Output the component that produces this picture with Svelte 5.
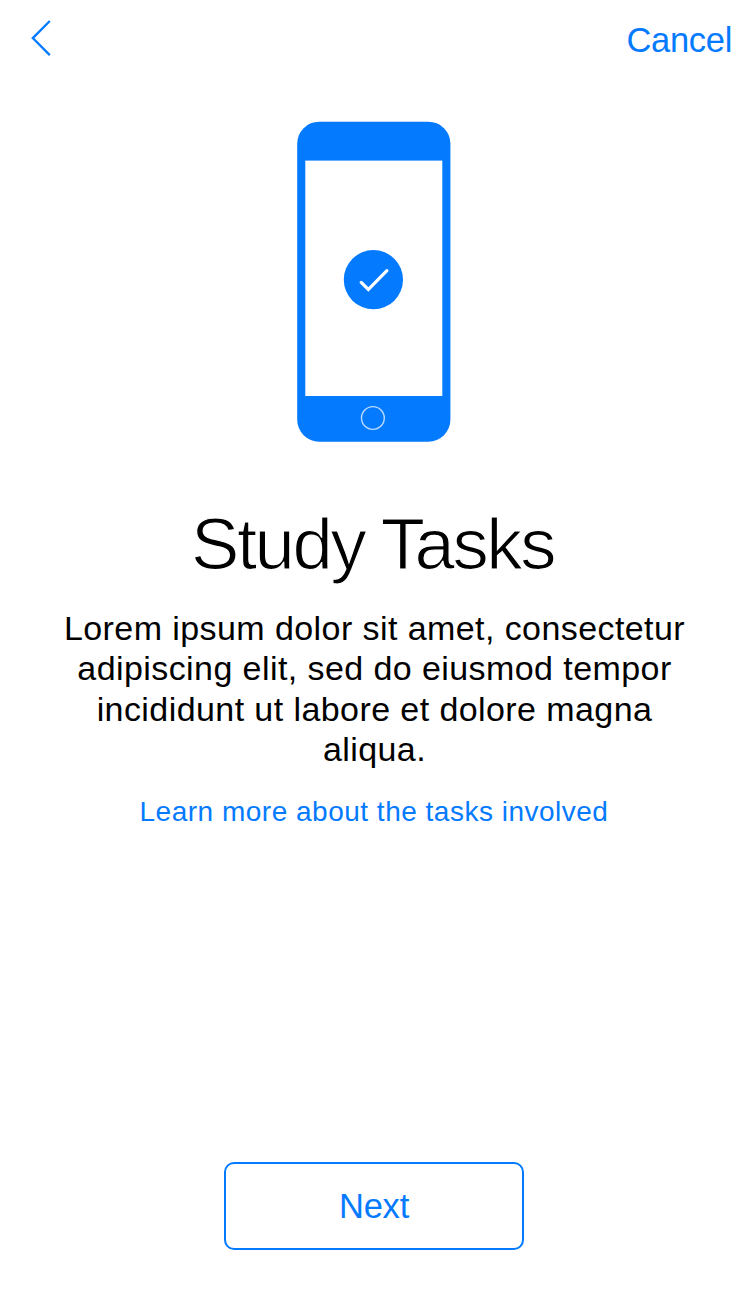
<script>
  const lines = [
    'Lorem ipsum dolor sit amet, consectetur',
    'adipiscing elit, sed do eiusmod tempor',
    'incididunt ut labore et dolore magna',
    'aliqua.'
  ];
</script>

<main class="screen">
  <header class="bar">
    <button class="plain back" aria-label="Back">
      <svg width="24" height="40" viewBox="0 0 24 40" fill="none" stroke="currentColor" stroke-width="2.3">
        <path d="M20.8 3 3.8 20.1l17 17" />
      </svg>
    </button>
    <button class="plain cancel">Cancel</button>
  </header>

  <svg class="phone" width="154" height="321" viewBox="0 0 154 321">
    <rect x="0.2" y="0.7" width="153.2" height="320" rx="22" fill="#047aff" />
    <rect x="8.3" y="39.6" width="137" height="235.4" fill="#fff" />
    <circle cx="76.4" cy="158.7" r="29.6" fill="#047aff" />
    <path d="m64.2 161.4 7.1 7.1 18.6-18.9" fill="none" stroke="#fff" stroke-width="3.2" stroke-linecap="round" stroke-linejoin="miter" />
    <circle cx="75.9" cy="297" r="11.4" fill="none" stroke="#b9dbff" stroke-width="1.4" />
  </svg>

  <h1>Study Tasks</h1>
  <p class="body">
    {#each lines as line}
      <span>{line}</span>
    {/each}
  </p>
  <button class="plain more">Learn more about the tasks involved</button>
  <button class="next">Next</button>
</main>

<style>
  :global(body) {
    margin: 0;
    background: #fff;
  }
  .screen {
    box-sizing: border-box;
    width: 749px;
    height: 1290px;
    display: flex;
    flex-direction: column;
    align-items: center;
    padding-bottom: 40px;
    overflow: hidden;
    color: #000;
    background: #fff;
    font-family: "Liberation Sans", Arial, sans-serif;
  }
  .bar {
    box-sizing: border-box;
    width: 100%;
    height: 121px;
    padding: 18px 17px 0 29px;
    display: flex;
    justify-content: space-between;
    align-items: flex-start;
  }
  button {
    font-family: inherit;
    color: #047aff;
    background: none;
    cursor: pointer;
  }
  .plain {
    border: 0;
    padding: 0;
  }
  .back svg,
  .phone {
    display: block;
  }
  .cancel {
    font-size: 34.5px;
    line-height: 45px;
    letter-spacing: -0.3px;
  }
  .phone {
    flex: none;
    margin-right: 1px;
  }
  h1 {
    margin: 57px 4px 0 0;
    font-size: 72.5px;
    line-height: 90px;
    font-weight: 400;
    letter-spacing: -2.4px;
    white-space: nowrap;
    -webkit-text-stroke: 1.2px #fff;
  }
  .body {
    margin: 19px 0 0;
    display: flex;
    flex-direction: column;
    align-items: center;
    font-size: 34px;
    line-height: 40.4px;
    letter-spacing: 0.42px;
    white-space: nowrap;
  }
  .more {
    margin: 24px 1px 0 0;
    font-size: 28px;
    line-height: 36px;
    letter-spacing: 0.5px;
  }
  .next {
    box-sizing: border-box;
    width: 300px;
    height: 88px;
    margin-top: auto;
    margin-right: 1px;
    padding: 0;
    border: 2px solid #047aff;
    border-radius: 10px;
    font-size: 34.5px;
    letter-spacing: -0.2px;
  }
</style>
